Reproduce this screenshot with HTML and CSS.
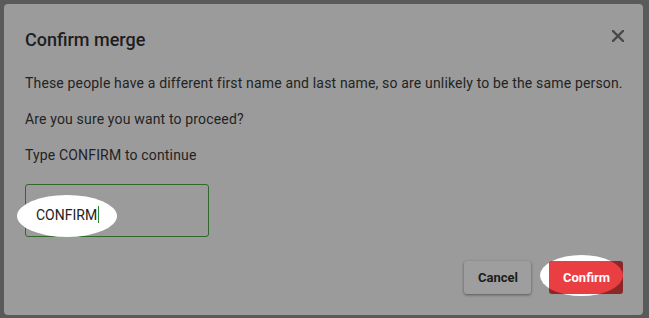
FILE: index.html
```html
<!DOCTYPE html>
<html>
<head>
	<meta charset="UTF-8">
	<title>Confirm merge</title>
	<link rel="stylesheet" href="styles.css">
</head>
<body>
	<div class="dialog">
		<div class="dlg-head">
			<h2 class="dlg-title">Confirm merge</h2>
			<span class="dlg-close">
				<svg width="12" height="12" viewBox="0 0 12 12"><path d="M1 1L11 11M11 1L1 11" stroke="#4a4a4a" stroke-width="2.4" stroke-linecap="square"/></svg>
			</span>
		</div>
		<p class="dlg-text">These people have a different first name and last name, so are unlikely to be the same person.</p>
		<p class="dlg-text">Are you sure you want to proceed?</p>
		<p class="dlg-text">Type CONFIRM to continue</p>

		<div class="confirm-box">
			<span class="confirm-val">CONFIRM<span class="caret"></span></span>
		</div>

		<div class="dlg-actions">
			<button class="btn btn-cancel">Cancel</button>
			<span class="spot">
				<button class="btn btn-confirm"><span>Confirm</span></button>
			</span>
		</div>
	</div>
</body>
</html>
```

FILE: styles.css
```css
html, body { margin: 0; padding: 0; }
body {
	background: #5a5a5a;
	font-family: Roboto, "Liberation Sans", sans-serif;
	color: #232323;
	width: 649px;
	height: 318px;
	overflow: hidden;
}
.dialog {
	margin: 4px 0 0 4px;
	width: 639px;
	height: 311px;
	box-sizing: border-box;
	background: #9b9b9b;
	border-radius: 4px;
	padding: 24px 20px 0 21px;
}
.dlg-head {
	display: flex;
	justify-content: space-between;
	align-items: center;
	height: 24px;
	margin-bottom: 21px;
}
.dlg-title {
	margin: 0;
	font-size: 18px;
	font-weight: 500;
	line-height: 24px;
	color: #1e1e1e;
}
.dlg-close {
	display: flex;
	margin-right: -1px;
	margin-top: -8px;
}
.dlg-text {
	margin: 0 0 16px 0;
	font-size: 14px;
	line-height: 20px;
	letter-spacing: 0.16px;
}
.confirm-box {
	position: relative;
	margin-top: 19px;
	width: 184px;
	height: 53px;
	box-sizing: border-box;
	border: 1px solid #2f6a2c;
	border-radius: 3px;
	padding: 20px 0 0 10px;
}
/* highlight ellipse round the typed value */
.confirm-box::before {
	content: "";
	position: absolute;
	left: -9px;
	top: 10px;
	width: 100px;
	height: 42px;
	border-radius: 50%;
	background: #fff;
}
.confirm-val {
	position: relative;
	font-size: 14px;
	line-height: 20px;
	color: #222;
}
.caret {
	display: inline-block;
	width: 1px;
	height: 17px;
	background: #2f8a2f;
	vertical-align: -3px;
	margin-left: 1px;
}
.dlg-actions {
	display: flex;
	justify-content: flex-end;
	gap: 18px;
	margin-top: 24px;
}
.btn {
	font-family: Roboto, "Liberation Sans", sans-serif;
	font-size: 13px;
	font-weight: 700;
	height: 33px;
	padding: 0 14px;
	border: none;
	border-radius: 3px;
}
.btn-cancel {
	background: #9e9e9e;
	color: #1c1c1c;
	width: 67px;
	box-shadow: 0 1px 3px rgba(0,0,0,.45);
}
.spot {
	position: relative;
	display: inline-block;
}
.spot::before {
	content: "";
	position: absolute;
	left: -9px;
	top: -6px;
	width: 83px;
	height: 41px;
	border-radius: 50%;
	background: #fff;
}
.btn-confirm {
	position: relative;
	overflow: hidden;
	width: 74px;
	background: #8c2628;
	color: #fff;
}
.btn-confirm::before {
	content: "";
	position: absolute;
	left: -9px;
	top: -6px;
	width: 83px;
	height: 41px;
	border-radius: 50%;
	background: #e93e42;
}
.btn-confirm span { position: relative; }
```
